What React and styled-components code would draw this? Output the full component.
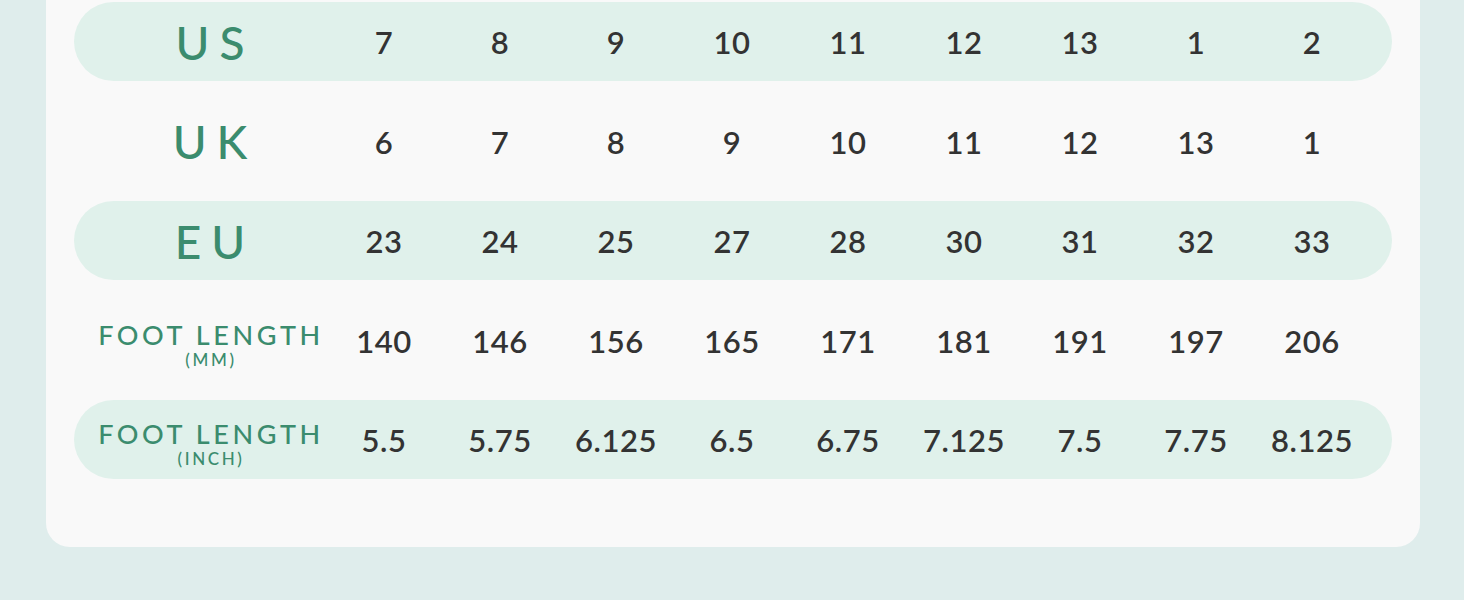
import React from 'react'
import styled, { createGlobalStyle } from 'styled-components'

const GlobalStyle = createGlobalStyle`
  html, body {
    margin: 0;
    padding: 0;
    background: #dfedec;
  }
  body {
    font-family: 'Lato', 'Open Sans', sans-serif;
  }
`

const Page = styled.div`
  width: 1464px;
  height: 600px;
  overflow: hidden;
  padding: 0 44px 0 46px;
  box-sizing: border-box;
`

const Card = styled.div`
  background: #f9f9f9;
  border-radius: 0 0 24px 24px;
  padding: 2px 28px 68px;
  display: flex;
  flex-direction: column;
  gap: 20.5px;
`

const Row = styled.div`
  height: 79px;
  border-radius: 40px;
  background: ${p => (p.shaded ? '#e0f1eb' : 'transparent')};
  display: grid;
  grid-template-columns: 232px repeat(9, 116px);
  align-items: center;
  padding: 0 20px;
`

const Label = styled.div`
  color: #3b8c6e;
  font-family: 'Lato', sans-serif;
  font-size: 46px;
  font-weight: 500;
  letter-spacing: 10px;
  text-align: center;
  padding-left: 10px;
  line-height: 1;
  margin-top: 2px;
`

const LongLabel = styled.div`
  color: #3b8c6e;
  display: flex;
  flex-direction: column;
  align-items: center;
  line-height: 1;
  margin-top: 8px;
  padding-left: 2px;
`

const Main = styled.span`
  font-size: 27px;
  font-weight: 500;
  letter-spacing: 3.6px;
`

const Unit = styled.span`
  font-size: 17px;
  font-weight: 500;
  letter-spacing: 2.6px;
  margin-top: 3px;
`

const Cell = styled.div`
  text-align: center;
  color: #333333;
  font-size: 31px;
  font-weight: 600;
  letter-spacing: 0.5px;
  margin-top: 1px;
`

const rows = [
  { label: 'US', values: ['7', '8', '9', '10', '11', '12', '13', '1', '2'] },
  { label: 'UK', values: ['6', '7', '8', '9', '10', '11', '12', '13', '1'] },
  { label: 'EU', values: ['23', '24', '25', '27', '28', '30', '31', '32', '33'] },
  { label: 'FOOT LENGTH', unit: '(MM)', values: ['140', '146', '156', '165', '171', '181', '191', '197', '206'] },
  { label: 'FOOT LENGTH', unit: '(INCH)', values: ['5.5', '5.75', '6.125', '6.5', '6.75', '7.125', '7.5', '7.75', '8.125'] },
]

const App = () => (
  <>
    <GlobalStyle />
    <Page>
      <Card>
        {rows.map((r, i) => (
          <Row key={i} shaded={i % 2 === 0}>
            {r.unit ? (
              <LongLabel>
                <Main>{r.label}</Main>
                <Unit>{r.unit}</Unit>
              </LongLabel>
            ) : (
              <Label>{r.label}</Label>
            )}
            {r.values.map((v, j) => (
              <Cell key={j}>{v}</Cell>
            ))}
          </Row>
        ))}
      </Card>
    </Page>
  </>
)

export default App
